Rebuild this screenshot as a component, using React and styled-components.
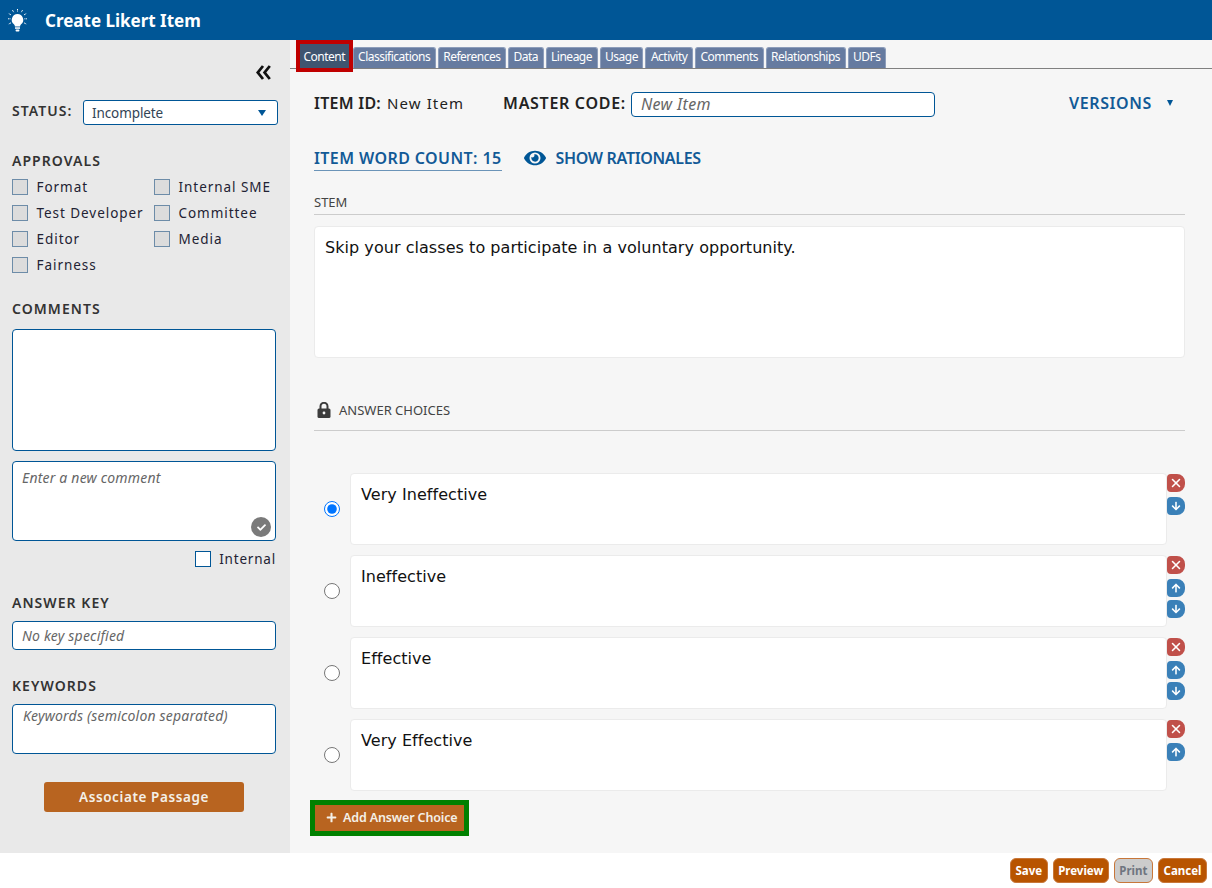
import React from "react"
import styled, { createGlobalStyle } from "styled-components"
import { FaEye, FaPlus, FaArrowUp, FaArrowDown, FaCheck } from "react-icons/fa"
import { X } from "lucide-react"

const GlobalStyle = createGlobalStyle`
  html, body {
    margin: 0;
    padding: 0;
    background: #fff;
  }
  body {
    font-family: "Noto Sans", "Open Sans", sans-serif;
    color: #222;
  }
  * {
    box-sizing: border-box;
  }
`

const TABS = ["Content", "Classifications", "References", "Data", "Lineage", "Usage", "Activity", "Comments", "Relationships", "UDFs"]
const APPROVALS = ["Format", "Internal SME", "Test Developer", "Committee", "Editor", "Media", "Fairness"]
const CHOICES = [
  { text: "Very Ineffective", checked: true, up: false, down: true },
  { text: "Ineffective", up: true, down: true },
  { text: "Effective", up: true, down: true },
  { text: "Very Effective", up: true, down: false },
]

const Bulb = () => (
  <svg width="19" height="23" viewBox="0 0 19 23" fill="none">
    <path d="M9.5 5a5.8 5.8 0 0 0-3.6 10.3c.7.6 1 1.300 1 2.200h5.200c0-.9.3-1.600 1-2.200A5.800 5.800 0 0 0 9.500 5z" fill="#fff" />
    <rect x="7" y="18.300" width="5" height="1.500" fill="#fff" />
    <rect x="7.600" y="20.400" width="3.800" height="2.200" rx=".8" fill="#fff" />
    <path
      d="M9.500 0v2.800M4.400 1l1.300 2.200M14.600 1l-1.300 2.200M.8 4.600 3 5.900M18.200 4.600 16 5.900M0 9.800h2.600M16.400 9.800H19M.8 15l2.200-1.200M18.200 15 16 13.800"
      stroke="#fff"
      strokeWidth="1"
      strokeDasharray="1 .5"
    />
  </svg>
)

const Chevrons = () => (
  <svg width="15" height="15" viewBox="0 0 15 15" fill="none" stroke="#111" strokeWidth="2.800">
    <path d="M7 1 1.800 7.500 7 14M13.800 1 8.600 7.500l5.200 6.500" />
  </svg>
)

const Padlock = () => (
  <svg width="14" height="16" viewBox="0 0 14 16">
    <path d="M3.500 7V4.300a3.500 3.500 0 0 1 7 0V7" fill="none" stroke="#3c3c3c" strokeWidth="2" />
    <rect x="0.500" y="6.500" width="13" height="9.500" rx="1.500" fill="#3c3c3c" />
    <circle cx="7" cy="11" r="1.400" fill="#f6f6f6" />
  </svg>
)

const App = () => {
  return (
    <>
      <GlobalStyle />
      <Page>
        <Header>
          <Bulb />
          <Title>Create Likert Item</Title>
        </Header>
        <Body>
          <Sidebar>
            <Collapse>
              <Chevrons />
            </Collapse>
            <StatusRow>
              <StatusLabel>STATUS:</StatusLabel>
              <Select>
                Incomplete
                <Caret />
              </Select>
            </StatusRow>
            <ApprovalsHeading>APPROVALS</ApprovalsHeading>
            <ApprovalGrid>
              {APPROVALS.map((a) => (
                <Approval key={a}>
                  <GreyCheck />
                  {a}
                </Approval>
              ))}
            </ApprovalGrid>
            <CommentsHeading>COMMENTS</CommentsHeading>
            <CommentsBox />
            <NewComment>
              Enter a new comment
              <Submit>
                <FaCheck size={9} color="#fff" />
              </Submit>
            </NewComment>
            <InternalRow>
              <WhiteCheck />
              Internal
            </InternalRow>
            <KeyHeading>ANSWER KEY</KeyHeading>
            <KeyInput>No key specified</KeyInput>
            <KeywordsHeading>KEYWORDS</KeywordsHeading>
            <KeywordsBox>Keywords (semicolon separated)</KeywordsBox>
            <Associate>Associate Passage</Associate>
          </Sidebar>
          <Main>
            <TabBar>
              {TABS.map((t, i) => (
                <Tab key={t} $active={i === 0}>
                  {t}
                </Tab>
              ))}
            </TabBar>
            <Content>
              <IdRow>
                <IdLabel>ITEM ID:</IdLabel>
                <IdValue>New Item</IdValue>
                <MasterLabel>MASTER CODE:</MasterLabel>
                <MasterInput>New Item</MasterInput>
                <Versions>
                  VERSIONS
                  <SmallCaret />
                </Versions>
              </IdRow>
              <CountRow>
                <WordCount>ITEM WORD COUNT: 15</WordCount>
                <FaEye size={22} color="#005696" />
                <Rationales>SHOW RATIONALES</Rationales>
              </CountRow>
              <SectionHead>STEM</SectionHead>
              <StemBox>Skip your classes to participate in a voluntary opportunity.</StemBox>
              <AnswerHead>
                <Padlock />
                ANSWER CHOICES
              </AnswerHead>
              <ChoiceList>
                {CHOICES.map((c) => (
                  <ChoiceRow key={c.text}>
                    <Radio type="radio" name="choice" defaultChecked={c.checked} />
                    <ChoiceBox>{c.text}</ChoiceBox>
                    <Actions>
                      <RemoveButton>
                        <X size={14} strokeWidth={2.6} />
                      </RemoveButton>
                      {c.up && (
                        <MoveButton>
                          <FaArrowUp size={10} />
                        </MoveButton>
                      )}
                      {c.down && (
                        <MoveButton>
                          <FaArrowDown size={10} />
                        </MoveButton>
                      )}
                    </Actions>
                  </ChoiceRow>
                ))}
              </ChoiceList>
              <AddButton>
                <FaPlus size={11} />
                Add Answer Choice
              </AddButton>
            </Content>
          </Main>
        </Body>
        <Footer>
          <FooterButton>Save</FooterButton>
          <FooterButton>Preview</FooterButton>
          <FooterButton $disabled>Print</FooterButton>
          <FooterButton>Cancel</FooterButton>
        </Footer>
      </Page>
    </>
  )
}

const Page = styled.div`
  width: 1212px;
  height: 888px;
  overflow: hidden;
  display: flex;
  flex-direction: column;
`

const Header = styled.header`
  height: 40px;
  flex: none;
  background: #005696;
  display: flex;
  align-items: center;
  padding-left: 8px;
  gap: 18px;
`

const Title = styled.h1`
  margin: 0;
  color: #fff;
  font-size: 17px;
  font-weight: 700;
`

const Body = styled.div`
  display: flex;
  height: 813px;
  flex: none;
`

const Sidebar = styled.aside`
  width: 290px;
  flex: none;
  background: #e9e9e9;
  padding: 0 12px;
  display: flex;
  flex-direction: column;
`

const Collapse = styled.div`
  display: flex;
  justify-content: flex-end;
  padding: 25px 7px 0 0;
  height: 60px;
`

const SideLabel = styled.span`
  font-size: 14px;
  font-weight: 600;
  letter-spacing: 1.05px;
  color: #333;
`

const StatusLabel = styled(SideLabel)`
  margin-bottom: 4px;
`

const StatusRow = styled.div`
  display: flex;
  align-items: center;
  justify-content: space-between;
  height: 25px;
`

const Select = styled.div`
  width: 195px;
  height: 25px;
  background: #fff;
  border: 1px solid #005696;
  border-radius: 3px;
  display: flex;
  align-items: center;
  justify-content: space-between;
  padding: 0 11px 0 8px;
  font-size: 13.5px;
  letter-spacing: -0.1px;
  color: #345;
`

const Caret = styled.span`
  width: 0;
  height: 0;
  border-left: 4px solid transparent;
  border-right: 4px solid transparent;
  border-top: 6px solid #005696;
`

const ApprovalsHeading = styled(SideLabel)`
  display: block;
  line-height: 19px;
  margin-top: 26px;
`

const ApprovalGrid = styled.div`
  display: grid;
  grid-template-columns: 142px 1fr;
  grid-auto-rows: 26px;
  margin-top: 4px;
`

const Approval = styled.label`
  display: flex;
  align-items: center;
  gap: 8.5px;
  font-size: 13.5px;
  letter-spacing: 0.95px;
  color: #223;
  white-space: nowrap;
`

const GreyCheck = styled.span`
  width: 16px;
  height: 16px;
  flex: none;
  background: #dcdcdc;
  border: 1px solid #6d8ca8;
`

const CommentsHeading = styled(SideLabel)`
  display: block;
  line-height: 19px;
  margin-top: 21px;
`

const Field = styled.div`
  background: #fff;
  border: 1px solid #005696;
  border-radius: 4px;
  width: 264px;
`

const Hint = styled(Field)`
  font-size: 14px;
  font-style: italic;
  letter-spacing: 0.2px;
  color: #666;
`

const CommentsBox = styled(Field)`
  height: 122px;
  margin-top: 11px;
`

const NewComment = styled(Hint)`
  position: relative;
  height: 80px;
  margin-top: 10px;
  padding: 6px 9px;
`

const Submit = styled.span`
  position: absolute;
  right: 4px;
  bottom: 3px;
  width: 20px;
  height: 20px;
  border-radius: 50%;
  background: #7a7a7a;
  display: flex;
  align-items: center;
  justify-content: center;
`

const InternalRow = styled.label`
  display: flex;
  align-items: center;
  justify-content: flex-end;
  gap: 8px;
  width: 264px;
  height: 18px;
  margin-top: 9px;
  font-size: 13.5px;
  letter-spacing: 0.8px;
  color: #223;
`

const WhiteCheck = styled.span`
  width: 16px;
  height: 16px;
  background: #fff;
  border: 1px solid #005696;
`

const KeyHeading = styled(SideLabel)`
  display: block;
  line-height: 19px;
  margin-top: 25px;
`

const KeyInput = styled(Hint)`
  height: 29px;
  margin-top: 9px;
  padding: 0 9px;
  line-height: 27px;
`

const KeywordsHeading = styled(SideLabel)`
  display: block;
  line-height: 19px;
  margin-top: 26px;
`

const KeywordsBox = styled(Hint)`
  height: 50px;
  margin-top: 9px;
  padding: 1px 10px;
`

const Associate = styled.button`
  width: 200px;
  height: 30px;
  margin: 28px 0 0 32px;
  border: none;
  border-radius: 3px;
  background: #b86420;
  color: #f4f0e8;
  font-family: inherit;
  font-size: 13.5px;
  font-weight: 600;
  letter-spacing: 0.6px;
`

const Main = styled.main`
  flex: 1;
  background: #f6f6f6;
  display: flex;
  flex-direction: column;
  min-width: 0;
`

const TabBar = styled.nav`
  height: 29px;
  display: flex;
  align-items: flex-end;
  gap: 2px;
  padding-left: 6px;
  border-bottom: 1px solid #808080;
`

const Tab = styled.div`
  height: ${(p) => (p.$active ? "32px" : "21px")};
  padding: ${(p) => (p.$active ? "0 3.5px" : "0 4.5px 3px")};
  display: flex;
  align-items: center;
  font-size: 12px;
  letter-spacing: -0.5px;
  color: #fff;
  background: ${(p) => (p.$active ? "#3f5570" : "#667ba0")};
  border: ${(p) => (p.$active ? "4px solid #c00000" : "1px solid #8d9dba")};
  border-bottom: ${(p) => (p.$active ? "4px solid #c00000" : "none")};
  border-radius: ${(p) => (p.$active ? "0" : "3px 3px 0 0")};
  margin-bottom: ${(p) => (p.$active ? "-4px" : "0")};
  margin-right: ${(p) => (p.$active ? "-2px" : "0")};
  position: relative;
`

const Content = styled.div`
  padding: 23px 27px 0 24px;
  display: flex;
  flex-direction: column;
`

const IdRow = styled.div`
  display: flex;
  align-items: center;
  height: 25px;
`

const IdLabel = styled.span`
  font-size: 16px;
  font-weight: 600;
  letter-spacing: 0.25px;
  color: #222;
  margin-bottom: 3px;
`

const MasterLabel = styled(IdLabel)`
  letter-spacing: 0.7px;
`

const IdValue = styled.span`
  font-size: 15px;
  letter-spacing: 1.1px;
  margin: 0 39px 3px 6px;
  color: #222;
`

const MasterInput = styled(Field)`
  width: 304px;
  height: 25px;
  margin-left: 5px;
  padding: 0 9px;
  line-height: 22px;
  font-size: 16px;
  font-style: italic;
  letter-spacing: 0.35px;
  color: #666;
`

const Versions = styled.div`
  margin-left: auto;
  display: flex;
  align-items: center;
  gap: 15px;
  padding-right: 12px;
  margin-bottom: 3px;
  font-size: 16px;
  font-weight: 600;
  letter-spacing: 0.6px;
  color: #125a96;
`

const SmallCaret = styled(Caret)`
  border-left-width: 3.5px;
  border-right-width: 3.5px;
  border-top-width: 6px;
`

const CountRow = styled.div`
  display: flex;
  align-items: center;
  margin-top: 28px;
  height: 26px;
`

const WordCount = styled.span`
  font-size: 16px;
  font-weight: 600;
  letter-spacing: 0.4px;
  color: #125a96;
  border-bottom: 1px solid #6b94b8;
  line-height: 24px;
  margin-right: 22px;
`

const Rationales = styled.span`
  font-size: 16px;
  font-weight: 600;
  letter-spacing: -0.33px;
  color: #125a96;
  margin-left: 10px;
`

const SectionHead = styled.div`
  margin-top: 23px;
  height: 21px;
  font-size: 13px;
  line-height: 16px;
  color: #444;
  border-bottom: 1px solid #ccc;
`

const Card = styled.div`
  background: #fff;
  border: 1px solid #ebebeb;
  border-radius: 4px;
  font-family: "DejaVu Sans", sans-serif;
  font-size: 16px;
  line-height: 20px;
  letter-spacing: 0.05px;
  color: #111;
`

const StemBox = styled(Card)`
  height: 132px;
  margin-top: 11px;
  padding: 11px 10px;
`

const AnswerHead = styled.div`
  margin-top: 44px;
  height: 29px;
  padding-left: 3px;
  display: flex;
  align-items: flex-start;
  gap: 8px;
  font-size: 13px;
  line-height: 16px;
  color: #444;
  border-bottom: 1px solid #ccc;
`

const ChoiceList = styled.div`
  margin-top: 42px;
  display: flex;
  flex-direction: column;
  gap: 10px;
`

const ChoiceRow = styled.div`
  display: flex;
  align-items: center;
`

const Radio = styled.input`
  width: 16px;
  height: 16px;
  margin: 0 10px;
  flex: none;
`

const ChoiceBox = styled(Card)`
  width: 817px;
  height: 72px;
  padding: 11px 10px;
`

const Actions = styled.div`
  align-self: flex-start;
  display: flex;
  flex-direction: column;
  gap: 3px;
  padding-top: 1px;
`

const ActionButton = styled.span`
  width: 18px;
  height: 18px;
  color: #fff;
  border-radius: 4px 8px 8px 4px;
  display: flex;
  align-items: center;
  justify-content: center;
`

const RemoveButton = styled(ActionButton)`
  background: #c0504a;
  margin-bottom: 2px;
`

const MoveButton = styled(ActionButton)`
  background: #3a80b8;
`

const AddButton = styled.button`
  width: 159px;
  height: 36px;
  margin: 9px 0 0 -4px;
  border: 5px solid #008000;
  background: #b86420;
  color: #f4f0e8;
  font-family: inherit;
  font-size: 12.5px;
  font-weight: 600;
  letter-spacing: -0.15px;
  display: flex;
  align-items: center;
  gap: 6px;
  padding: 0 0 2px 11px;
`

const Footer = styled.footer`
  flex: 1;
  background: #fff;
  display: flex;
  justify-content: flex-end;
  align-items: flex-start;
  gap: 5px;
  padding: 5px 5px 0 0;
`

const FooterButton = styled.button`
  height: 25px;
  padding: 0 4.5px;
  border: 1px solid #c8773a;
  border-radius: 6px;
  background: ${(p) => (p.$disabled ? "#cccccc" : "#b85400")};
  color: ${(p) => (p.$disabled ? "#6f7580" : "#fff")};
  font-family: inherit;
  font-size: 11.5px;
  font-weight: 700;
`

export default App
